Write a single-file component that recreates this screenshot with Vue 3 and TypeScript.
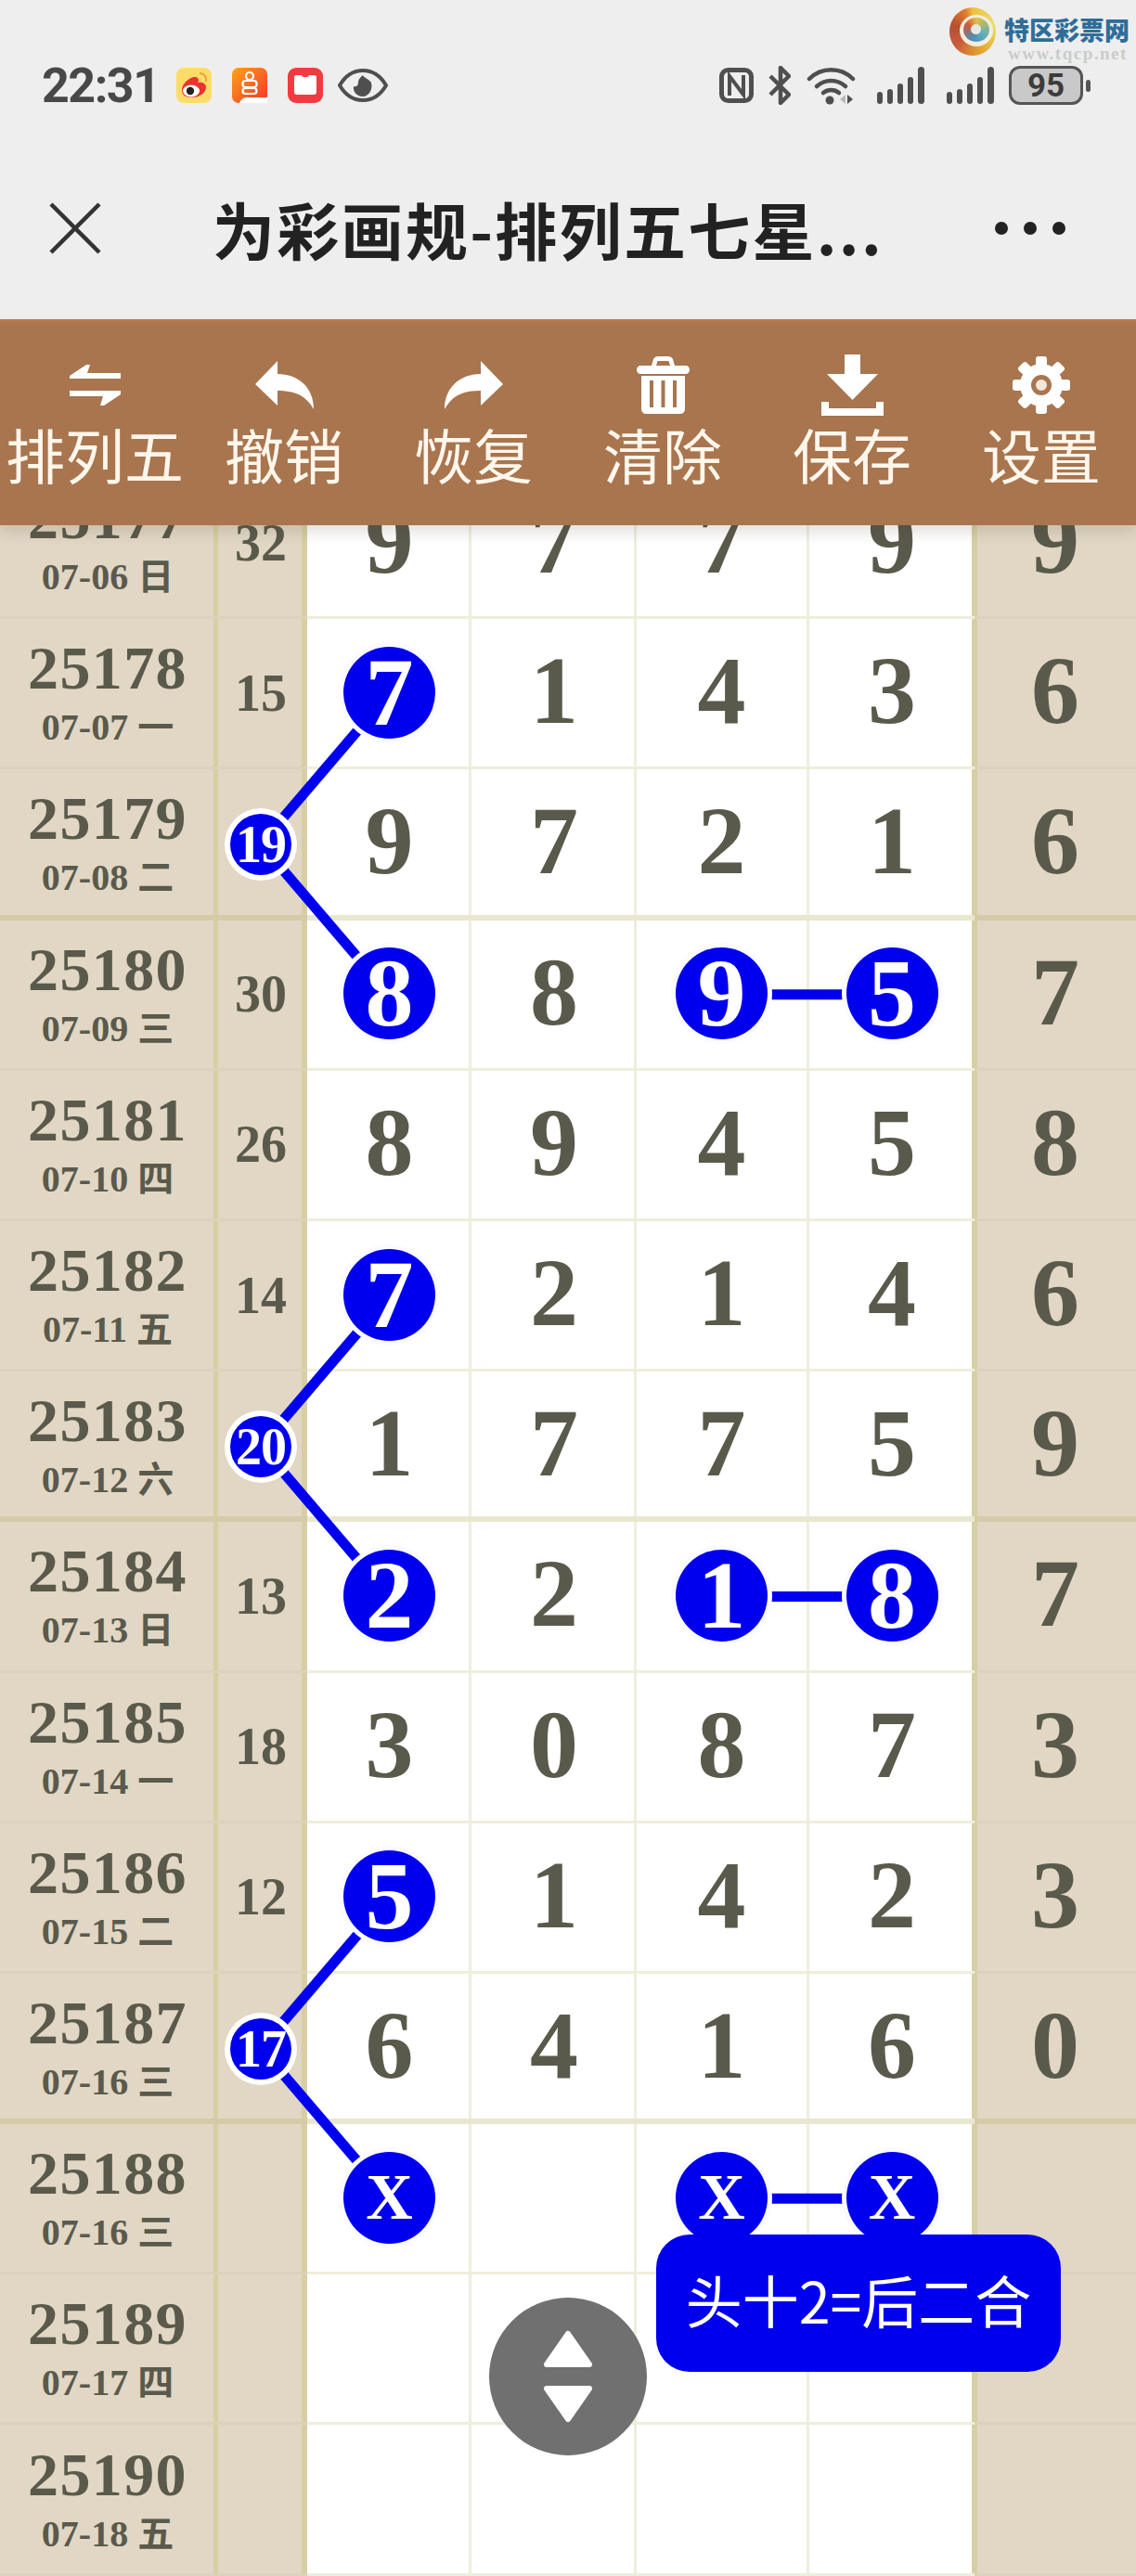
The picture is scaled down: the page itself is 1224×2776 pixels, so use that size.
<script setup lang="ts">
import { computed } from 'vue'

type Row = {
  issue: string
  date: string
  week: string
  sum: string
  sumBall?: boolean
  nums: string[]
  balls?: number[]
}

const rowH = 162.2
const colX = [419.5, 597, 777.5, 961]
const sumX = 281

const rows: Row[] = [
  { issue: '25177', date: '07-06', week: '日', sum: '32', nums: ['9', '7', '7', '9', '9'] },
  { issue: '25178', date: '07-07', week: '一', sum: '15', nums: ['7', '1', '4', '3', '6'], balls: [0] },
  { issue: '25179', date: '07-08', week: '二', sum: '19', sumBall: true, nums: ['9', '7', '2', '1', '6'] },
  { issue: '25180', date: '07-09', week: '三', sum: '30', nums: ['8', '8', '9', '5', '7'], balls: [0, 2, 3] },
  { issue: '25181', date: '07-10', week: '四', sum: '26', nums: ['8', '9', '4', '5', '8'] },
  { issue: '25182', date: '07-11', week: '五', sum: '14', nums: ['7', '2', '1', '4', '6'], balls: [0] },
  { issue: '25183', date: '07-12', week: '六', sum: '20', sumBall: true, nums: ['1', '7', '7', '5', '9'] },
  { issue: '25184', date: '07-13', week: '日', sum: '13', nums: ['2', '2', '1', '8', '7'], balls: [0, 2, 3] },
  { issue: '25185', date: '07-14', week: '一', sum: '18', nums: ['3', '0', '8', '7', '3'] },
  { issue: '25186', date: '07-15', week: '二', sum: '12', nums: ['5', '1', '4', '2', '3'], balls: [0] },
  { issue: '25187', date: '07-16', week: '三', sum: '17', sumBall: true, nums: ['6', '4', '1', '6', '0'] },
  { issue: '25188', date: '07-16', week: '三', sum: '', nums: ['X', '', 'X', 'X', ''], balls: [0, 2, 3] },
  { issue: '25189', date: '07-17', week: '四', sum: '', nums: ['', '', '', '', ''] },
  { issue: '25190', date: '07-18', week: '五', sum: '', nums: ['', '', '', '', ''] },
]

const tools = [
  { label: '排列五', icon: 'swap' },
  { label: '撤销', icon: 'undo' },
  { label: '恢复', icon: 'redo' },
  { label: '清除', icon: 'trash' },
  { label: '保存', icon: 'save' },
  { label: '设置', icon: 'gear' },
]

const tableH = rows.length * rowH
const rowY = (i: number) => (i + 0.5) * rowH - 1

// 和值球连到上一行和下一行的第一位，下一行的后两位再连一条横线
const links = computed(() => {
  const out: { x1: number; y1: number; x2: number; y2: number }[] = []
  rows.forEach((r, i) => {
    if (!r.sumBall) return
    out.push({ x1: sumX, y1: rowY(i), x2: colX[0], y2: rowY(i - 1) })
    out.push({ x1: sumX, y1: rowY(i), x2: colX[0], y2: rowY(i + 1) })
    out.push({ x1: colX[2], y1: rowY(i + 1), x2: colX[3], y2: rowY(i + 1) })
  })
  return out
})

const teeth = [0, 45, 90, 135, 180, 225, 270, 315]
</script>

<template>
  <div class="page">
    <header class="top">
      <div class="status">
        <span class="time">22:31</span>
        <svg class="app weibo" viewBox="0 0 38 38">
          <rect width="38" height="38" rx="8" fill="#ffdc6a" />
          <path d="M6 24c0-7 9-15 15-14 4 1 3 5 2 6 5-1 9 1 9 5 0 6-7 11-15 11S6 29 6 24z" fill="#e8342c" />
          <ellipse cx="16" cy="25" rx="9" ry="6.5" fill="#fff" />
          <circle cx="15" cy="25" r="4.2" fill="#222" />
          <path d="M25 6c5 0 8 4 7 9" fill="none" stroke="#f0a030" stroke-width="2" />
        </svg>
        <svg class="app shop" viewBox="0 0 38 38">
          <defs>
            <linearGradient id="shopBg" x1="0" y1="0" x2="1" y2="1">
              <stop offset="0" stop-color="#ffa216" />
              <stop offset="1" stop-color="#f0352c" />
            </linearGradient>
          </defs>
          <rect width="38" height="38" rx="7" fill="url(#shopBg)" />
          <g fill="none" stroke="#fff" stroke-width="2.2">
            <circle cx="19" cy="9" r="4" />
            <rect x="11.500" y="14" width="15" height="7" rx="3" />
            <rect x="11.500" y="22" width="15" height="6" rx="3" />
          </g>
          <path d="M8 38c2-5 5-6 9-6h17c2 0 4 1 4-1v7z" fill="#fff" />
        </svg>
        <svg class="app red" viewBox="0 0 38 38">
          <rect width="38" height="38" rx="9" fill="#f33a40" />
          <path d="M7 10c0-1 1-2 2-2h6c1 3 7 3 8 0h6c1 0 2 1 2 2v16c0 2-1 3-3 3H10c-2 0-3-1-3-3z" fill="#fff" />
        </svg>
        <svg class="app eye" viewBox="0 0 54 38">
          <path d="M2 19C9 7 18 3 27 3s18 4 25 16c-7 12-16 16-25 16S9 31 2 19z" fill="none" stroke="#4f4f4f" stroke-width="4" />
          <path d="M27 8c1 3 5 3 9 8 2 8-3 15-9 15-7 0-11-6-10-11 3 1 5-1 5-4 0-4 3-6 5-8z" fill="#4f4f4f" />
        </svg>

        <div class="status-right">
          <svg class="nfc" viewBox="0 0 37 38">
            <rect x="2.500" y="2.500" width="32" height="33" rx="7" fill="none" stroke="#4f4f4f" stroke-width="5" />
            <path d="M11 30V9l15 20V8" fill="none" stroke="#4f4f4f" stroke-width="4" />
          </svg>
          <svg class="bt" viewBox="0 0 24 42">
            <path d="M2 11l20 20-9 9V2l9 9L2 31" fill="none" stroke="#4f4f4f" stroke-width="4.500" stroke-linejoin="round" />
          </svg>
          <svg class="wifi" viewBox="0 0 53 42">
            <g fill="none" stroke="#4f4f4f" stroke-width="4.500" stroke-linecap="round">
              <path d="M3 14C16 1 37 1 50 14" />
              <path d="M11 22c9-8 22-8 31 0" />
              <path d="M18 29c5-4 12-4 17 0" />
            </g>
            <circle cx="25" cy="37" r="4.500" fill="#4f4f4f" />
            <path d="M36 36l6-5v10z" fill="#b8b8b8" />
            <path d="M44 31l6 5-6 5z" fill="#4f4f4f" />
          </svg>
          <svg v-for="n in 2" :key="n" class="signal" viewBox="0 0 52 40">
            <g fill="#4f4f4f">
              <rect x="0" y="27" width="6" height="13" rx="3" />
              <rect x="11" y="24" width="6" height="16" rx="3" />
              <rect x="22" y="18" width="6" height="22" rx="3" />
              <rect x="33" y="11" width="6" height="29" rx="3" />
              <rect x="44" y="0" width="7" height="40" rx="3.500" />
            </g>
          </svg>
          <div class="battery"><span>95</span></div>
          <i class="nub"></i>
        </div>
      </div>

      <div class="nav">
        <svg class="close" viewBox="0 0 56 56">
          <path d="M2 2l52 52M54 2L2 54" fill="none" stroke="#333" stroke-width="4.500" />
        </svg>
        <div class="title">为彩画规-排列五七星...</div>
        <div class="more"><i></i><i></i><i></i></div>
      </div>
    </header>

    <nav class="toolbar">
      <div v-for="t in tools" :key="t.label" class="tool">
        <div class="tool-icon">
          <svg v-if="t.icon === 'swap'" width="55" height="44" viewBox="0 0 55 44">
            <path d="M0 12L18 0h4l-3 9h36v6H0zM0 28h55v4L37 44h-4l3-10H0z" fill="#fff" />
          </svg>
          <svg v-else-if="t.icon === 'undo'" width="63" height="52" viewBox="0 0 63 52">
            <path d="M0 25L24 0v14c22 0 39 14 39 38-8-14-19-20-39-20v16z" fill="#fff" />
          </svg>
          <svg v-else-if="t.icon === 'redo'" width="65" height="52" viewBox="0 0 63 52">
            <path d="M63 25L39 0v14C17 14 0 28 0 52c8-14 19-20 39-20v16z" fill="#fff" />
          </svg>
          <svg v-else-if="t.icon === 'trash'" width="57" height="62" viewBox="0 0 57 62">
            <path
              fill="#fff"
              fill-rule="evenodd"
              d="M16 10l2-7c1-2 3-3 5-3h11c2 0 4 1 5 3l2 7h12c2 0 4 2 4 4.500S55 19 53 19H4c-2 0-4-2-4-4.500S2 10 4 10zm5 0h15l-1.500-5h-12zM5 21h47v35c0 4-2 6-6 6H11c-4 0-6-2-6-6zm9 5v29h4V26zm12.500 0v29h4V26zM39 26v29h4V26z"
            />
          </svg>
          <svg v-else-if="t.icon === 'save'" width="67" height="66" viewBox="0 0 67 66">
            <path d="M25 0h17v21h19L33.500 49 6 21h19zM0 51h8v7h51v-7h8v15H0z" fill="#fff" />
          </svg>
          <svg v-else width="62" height="62" viewBox="-31 -31 62 62">
            <g fill="#fff">
              <rect v-for="a in teeth" :key="a" x="-6" y="-31" width="12" height="14" rx="3" :transform="`rotate(${a})`" />
              <circle r="23" />
            </g>
            <circle r="11" fill="#a8754e" />
            <circle r="6" fill="#f3e6da" />
          </svg>
        </div>
        <div class="tool-label">{{ t.label }}</div>
      </div>
    </nav>

    <main class="scroller">
      <div class="table">
        <svg class="links" width="1224" :height="tableH" :viewBox="`0 0 1224 ${tableH}`">
          <line
            v-for="(l, i) in links"
            :key="i"
            :x1="l.x1"
            :y1="l.y1"
            :x2="l.x2"
            :y2="l.y2"
            stroke="#0000ee"
            stroke-width="11"
          />
        </svg>
        <div v-for="(r, i) in rows" :key="r.issue" class="row" :class="{ thick: i % 4 === 2 }">
          <div class="cell tan first">
            <div class="issue">{{ r.issue }}</div>
            <div class="date">{{ r.date }} <span class="week">{{ r.week }}</span></div>
          </div>
          <div class="cell tan second">
            <span v-if="r.sumBall" class="mini">{{ r.sum }}</span>
            <span v-else class="sum">{{ r.sum }}</span>
          </div>
          <div
            v-for="(n, j) in r.nums"
            :key="j"
            class="cell num"
            :class="j === 4 ? 'tan last' : `white c${j}`"
          >
            <span v-if="r.balls?.includes(j)" class="ball" :class="{ cross: n === 'X' }">{{ n }}</span>
            <template v-else>{{ n }}</template>
          </div>
        </div>
      </div>
    </main>

    <div class="watermark">
      <div class="swirl"><i class="s1"></i><i class="s2"></i><i class="s3"></i></div>
      <div class="mark-text">
        <div class="mark-name">特区彩票网</div>
        <div class="mark-url">www.tqcp.net</div>
      </div>
    </div>

    <div class="toast">头十2=后二合</div>

    <div class="float">
      <svg width="58" height="102" viewBox="0 0 58 102">
        <path d="M29 5L52 38H6zM6 64h46L29 97z" fill="#fff" stroke="#fff" stroke-width="6" stroke-linejoin="round" />
      </svg>
    </div>
  </div>
</template>

<style>
html,
body {
  margin: 0;
  background: #fff;
}
</style>

<style scoped>
.page {
  position: relative;
  width: 1224px;
  height: 2776px;
  overflow: hidden;
  display: flex;
  flex-direction: column;
  font-family: 'Liberation Serif', 'Noto Sans CJK SC', serif;
}

.top {
  height: 344px;
  background: #eeeeee;
  flex: none;
  display: flex;
  flex-direction: column;
}

.status {
  height: 72px;
  margin-top: 56px;
  padding: 0 49px 0 45px;
  display: flex;
  align-items: center;
  font-family: Roboto, 'Noto Sans', sans-serif;
}

.time {
  font-size: 52px;
  font-weight: 700;
  letter-spacing: -1.5px;
  color: #484848;
  margin-right: 18px;
}

.app {
  height: 38px;
  width: 38px;
  margin-right: 22px;
}

.app.eye {
  width: 54px;
  margin-left: -6px;
}

.status-right {
  margin-left: auto;
  display: flex;
  align-items: center;
}

.nfc {
  width: 37px;
  height: 38px;
  margin-right: 16px;
}

.bt {
  width: 24px;
  height: 42px;
  margin-right: 17px;
}

.wifi {
  width: 53px;
  height: 42px;
  margin-right: 23px;
}

.signal {
  width: 52px;
  height: 40px;
  margin-right: 23px;
}

.signal:last-of-type {
  margin-right: 15px;
}

.battery {
  width: 80px;
  height: 42px;
  box-sizing: border-box;
  border: 3px solid #555;
  border-radius: 12px;
  background: #c9c9c9;
  display: flex;
  align-items: center;
  justify-content: center;
  font-size: 35px;
  font-weight: 700;
  color: #3c3c3c;
}

.nub {
  width: 5px;
  height: 13px;
  margin-left: 3px;
  border-radius: 3px;
  background: #555;
}

.nav {
  flex: 1;
  display: flex;
  align-items: center;
  padding: 0 76px 0 53px;
  margin-top: 20px;
  font-family: 'Noto Sans CJK SC', sans-serif;
}

.close {
  width: 56px;
  height: 56px;
  flex: none;
}

.title {
  margin-left: 120px;
  font-size: 67px;
  line-height: 80px;
  font-weight: 700;
  letter-spacing: 2.3px;
  color: #222;
  white-space: nowrap;
}

.more {
  margin-left: auto;
  display: flex;
  gap: 17px;
}

.more i {
  width: 14px;
  height: 14px;
  border-radius: 50%;
  background: #222;
}

.toolbar {
  position: relative;
  z-index: 5;
  flex: none;
  height: 222px;
  box-sizing: border-box;
  padding-top: 35px;
  background: #a8754e;
  border-top: 3px solid #b97a4a;
  box-shadow: 0 8px 14px rgba(60, 40, 30, 0.14);
  display: grid;
  grid-template-columns: repeat(6, 1fr);
}

.tool {
  display: flex;
  flex-direction: column;
  align-items: center;
}

.tool-icon {
  height: 66px;
  display: flex;
  align-items: center;
  justify-content: center;
}

.tool-label {
  font-family: 'Noto Sans CJK SC', sans-serif;
  font-size: 64px;
  line-height: 80px;
  color: #fff6ec;
  white-space: nowrap;
}

.scroller {
  flex: 1;
  min-height: 0;
  overflow: hidden;
}

.table {
  position: relative;
  isolation: isolate;
  margin-top: -61px;
  display: flex;
  flex-direction: column;
}

.links {
  position: absolute;
  left: 0;
  top: 0;
  z-index: 1;
}

.row {
  height: 162.2px;
  flex: none;
  display: grid;
  grid-template-columns: 235px 96px 177px 178px 186px 178px 174px;
}

.cell {
  --h: #eeeedc;
  --v: #eeeedf;
  --hw: 3px;
  display: flex;
  flex-direction: column;
  align-items: center;
  justify-content: center;
  color: #5a5a4c;
  font-weight: 700;
  box-shadow: inset 0 calc(var(--hw) * -1) 0 var(--h), inset -3px 0 0 var(--v);
}

.white {
  background: #fff;
}

.tan {
  --h: #dbd1bd;
  background: #e1d7c4;
}

.thick .cell {
  --hw: 6px;
  --h: #e9e7cf;
}

.thick .tan {
  --h: #d5cba8;
}

.first {
  --v: #d6cfa4;
  padding-right: 3px;
  box-shadow: inset 0 calc(var(--hw) * -1) 0 var(--h), inset -5px 0 0 var(--v);
}

.second {
  --v: #d6cfa4;
  padding-right: 4px;
  box-shadow: inset 0 calc(var(--hw) * -1) 0 var(--h), inset -6px 0 0 var(--v);
}

.c2 {
  padding-right: 3px;
}

.c3 {
  --v: #d6cfa4;
}

.last {
  box-shadow: inset 0 calc(var(--hw) * -1) 0 var(--h), inset 3px 0 0 #d6cfa4;
}

.issue {
  font-size: 66px;
  line-height: 72px;
  letter-spacing: 1.4px;
}

.date {
  font-size: 40px;
  line-height: 56px;
  white-space: nowrap;
}

.week {
  font-size: 39px;
}

.sum {
  font-size: 56px;
  margin-top: -3px;
}

.num {
  font-size: 104px;
  line-height: 1;
  padding-bottom: 8px;
}

.ball {
  position: relative;
  z-index: 2;
  width: 99px;
  height: 99px;
  margin-top: 4px;
  border-radius: 50%;
  background: #0000ee;
  box-shadow: 0 0 0 5px #fbfbff;
  color: #fff;
  font-size: 104px;
  line-height: 97px;
  text-align: center;
}

.ball.cross {
  font-size: 70px;
}

.mini {
  position: relative;
  z-index: 2;
  width: 66px;
  height: 66px;
  border-radius: 50%;
  background: #0000ee;
  box-shadow: 0 0 0 6px #fff;
  color: #fff;
  font-size: 56px;
  line-height: 66px;
  letter-spacing: -1px;
  text-align: center;
}

.watermark {
  position: absolute;
  left: 1023px;
  top: 8px;
  display: flex;
  align-items: flex-start;
  gap: 9px;
}

.swirl {
  position: relative;
  width: 50px;
  height: 52px;
  border-radius: 50%;
  overflow: hidden;
  background: conic-gradient(#f0c040, #e8e070 70deg, #e8c040 120deg, #e09a30 170deg, #c85a3c 230deg, #b8502f 290deg, #e07a30 340deg, #f0c040);
}

.swirl i {
  position: absolute;
  border-radius: 50%;
}

.s1 {
  left: 11px;
  top: 8px;
  width: 36px;
  height: 34px;
  background: #f3ece0;
}

.s2 {
  left: 15px;
  top: 11px;
  width: 28px;
  height: 26px;
  background: conic-gradient(#e0c040, #60b0b8 120deg, #4a90c0 200deg, #d0583c 300deg, #e0c040);
}

.s3 {
  left: 23px;
  top: 18px;
  width: 11px;
  height: 11px;
  background: #e8e8e0;
}

.mark-text {
  padding-top: 8px;
}

.mark-name {
  font-family: 'Noto Sans CJK SC', sans-serif;
  font-size: 27px;
  line-height: 32px;
  font-weight: 900;
  color: #2f6d98;
  white-space: nowrap;
}

.mark-url {
  font-size: 19px;
  line-height: 20px;
  font-weight: 700;
  letter-spacing: 1.5px;
  color: #c9cccc;
  padding-left: 4px;
}

.toast {
  position: absolute;
  z-index: 6;
  left: 707px;
  top: 2408px;
  width: 436px;
  height: 148px;
  border-radius: 36px;
  background: #0000ee;
  color: #fff;
  font-family: 'Noto Sans CJK SC', sans-serif;
  font-size: 61px;
  line-height: 140px;
  text-align: center;
  white-space: nowrap;
}

.float {
  position: absolute;
  z-index: 6;
  left: 527px;
  top: 2476px;
  width: 170px;
  height: 170px;
  border-radius: 50%;
  background: rgba(104, 104, 104, 0.95);
  display: flex;
  align-items: center;
  justify-content: center;
}
</style>
